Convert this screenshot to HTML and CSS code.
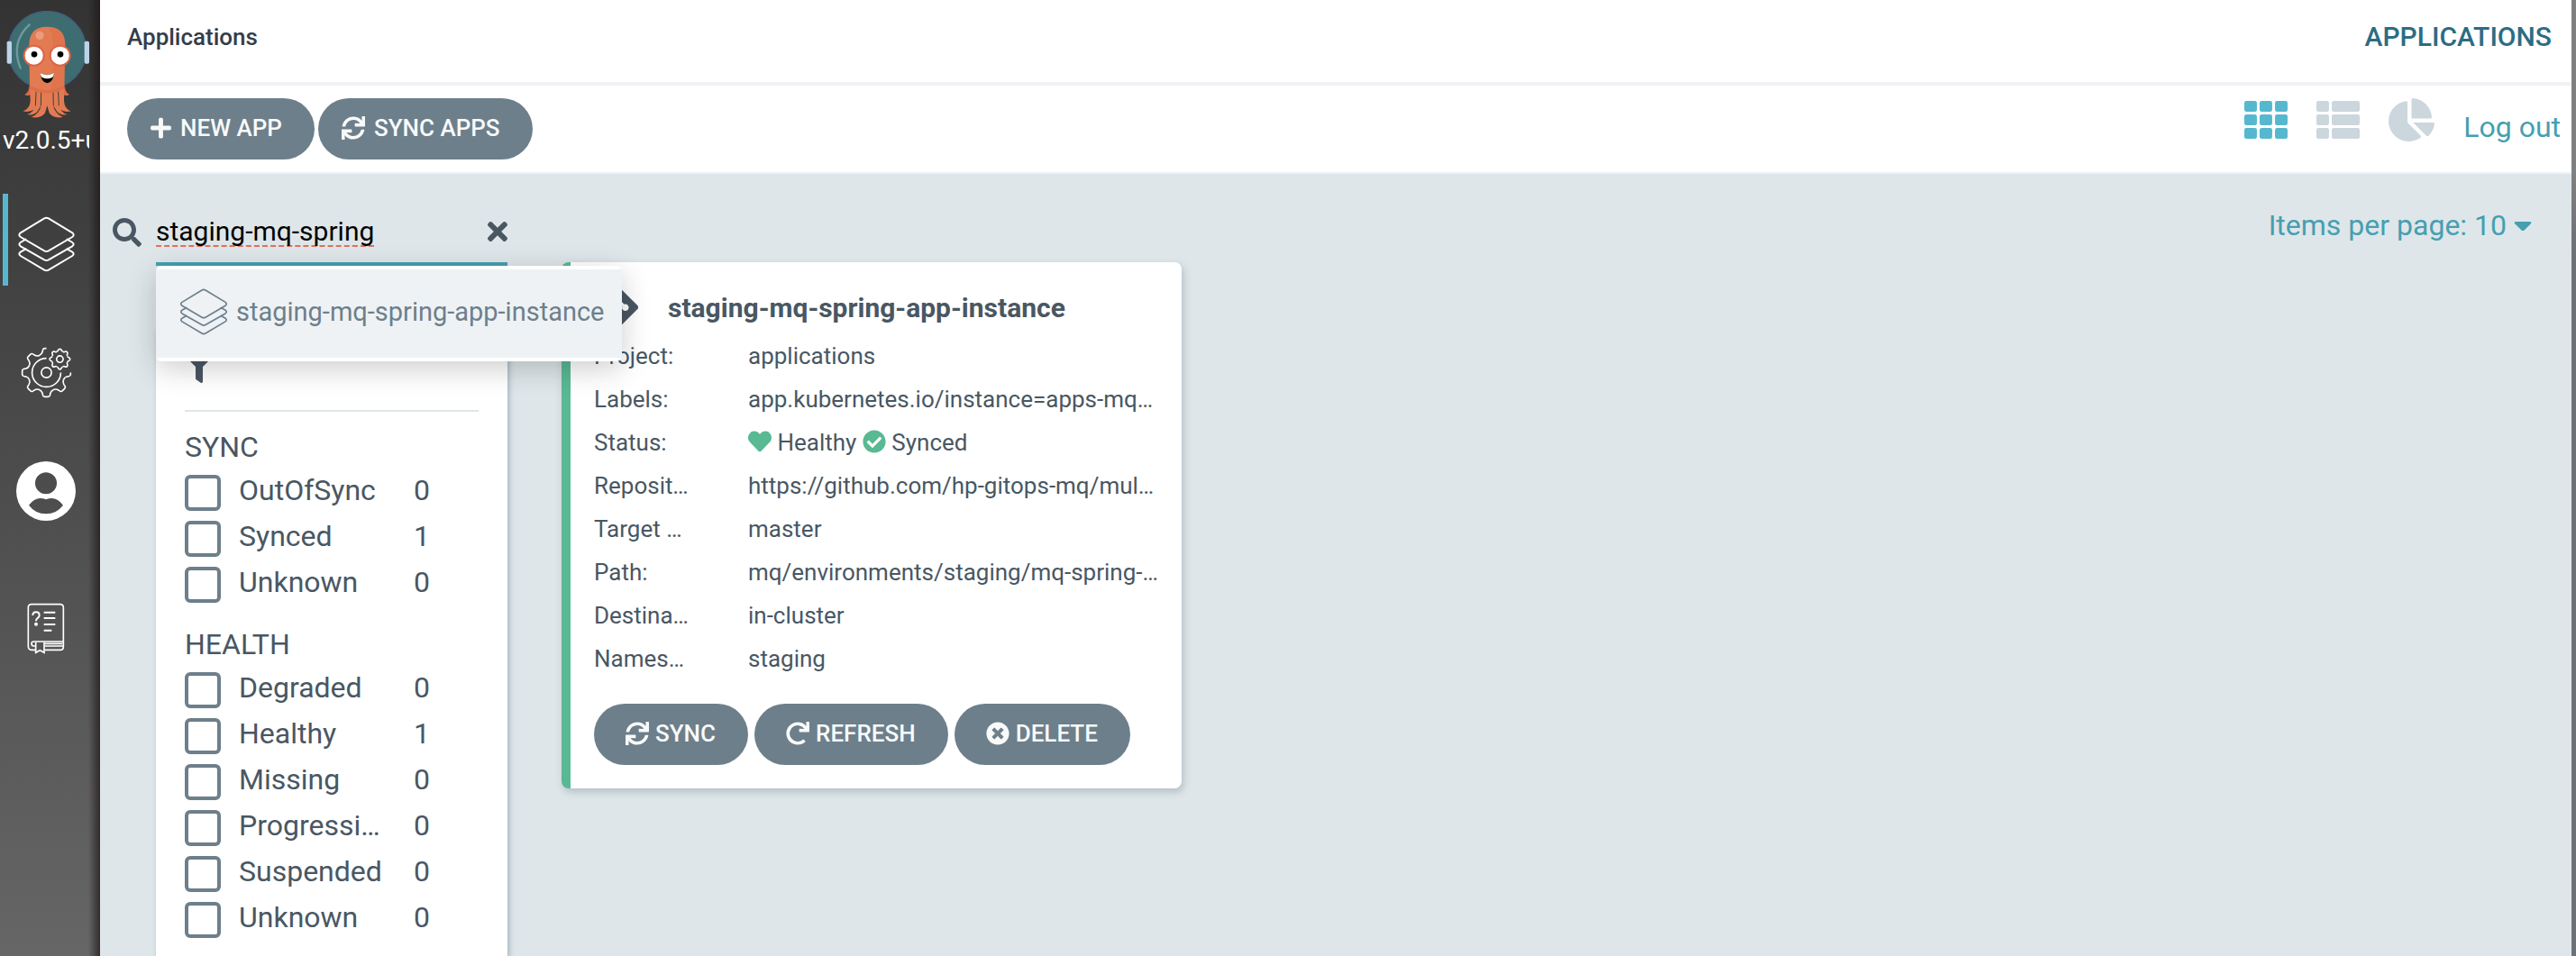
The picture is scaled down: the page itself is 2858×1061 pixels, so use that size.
FILE: index.html
```html
<!DOCTYPE html>
<html lang="en">
<head>
<meta charset="utf-8">
<title>Applications</title>
<link rel="stylesheet" href="styles.css">
</head>
<body>
<svg class="defs" aria-hidden="true">
  <symbol id="i-layers" viewBox="59 720 188 186">
    <g fill="none" stroke="currentColor" stroke-linejoin="round" stroke-linecap="round">
      <path d="M146 727 Q153 723 160 727 L239 775 Q248 782 239 789 L160 835 Q153 839 146 835 L67 789 Q58 782 67 775 Z"/>
      <path d="M84 797 L67 807 Q58 813 67 820 L146 865 Q153 869 160 865 L239 820 Q248 813 239 807 L222 797"/>
      <path d="M84 829 L67 839 Q58 845 67 852 L146 899 Q153 903 160 899 L239 852 Q248 845 239 839 L222 829"/>
    </g>
  </symbol>
  <symbol id="i-sync" viewBox="0 0 512 512"><path fill="currentColor" d="M440.65 12.57l4 82.77A247.16 247.16 0 0 0 255.83 8C134.73 8 33.91 94.92 12.29 209.82A12 12 0 0 0 24.09 224h49.05a12 12 0 0 0 11.67-9.26 175.91 175.91 0 0 1 317-56.94l-101.46-4.86a12 12 0 0 0-12.57 12v47.41a12 12 0 0 0 12 12H500a12 12 0 0 0 12-12V12a12 12 0 0 0-12-12h-47.37a12 12 0 0 0-11.98 12.57zM255.83 432a175.61 175.61 0 0 1-146-77.8l101.8 4.87a12 12 0 0 0 12.57-12v-47.4a12 12 0 0 0-12-12H12a12 12 0 0 0-12 12V500a12 12 0 0 0 12 12h47.35a12 12 0 0 0 12-12.6l-4.15-82.57A247.17 247.17 0 0 0 255.83 504c121.11 0 221.93-86.92 243.55-201.82a12 12 0 0 0-11.8-14.18h-49.05a12 12 0 0 0-11.67 9.26A175.86 175.86 0 0 1 255.83 432z"/></symbol>
</svg>
<div class="layout">
  <aside class="sidebar">
    <svg class="logo" viewBox="21 36 276 357" role="img" aria-label="Argo">
      <circle cx="157" cy="167" r="129" fill="#3d6d71" stroke="#43617b" stroke-width="5"/>
      <rect x="23" y="137" width="16" height="75" rx="5" fill="#bcd3ea"/>
      <rect x="281" y="137" width="16" height="75" rx="5" fill="#bcd3ea"/>
      <path d="M98 82 Q34 140 68 227" fill="none" stroke="#6f9b9c" stroke-width="7" stroke-linecap="round"/>
      <path d="M97 282 Q98 308 82 315 Q92 322 104 314 Z M216 282 Q215 308 231 315 Q221 322 209 314 Z" fill="#dd6a4c"/>
      <path d="M97 150 Q97 89 157 89 Q217 89 217 150 L214 290 L213 335 Q214 362 236 370 Q214 376 200 364 L197 350 Q200 374 224 381 Q204 386 190 372 L177 350 Q182 378 210 390 Q176 396 164 376 L157 352 L150 376 Q138 396 104 390 Q132 378 137 350 L124 372 Q110 386 90 381 Q114 374 117 350 L114 364 Q98 376 76 370 Q100 362 101 335 L99 290 Z" fill="#e27b52"/>
      <path d="M120 305 L118 352 M137 308 L136 352 M177 308 L178 352 M194 305 L196 352" stroke="#3f4041" stroke-width="3"/>
      <path d="M160 89 Q217 91 217 150 L213 290 Q190 300 170 300 Q182 200 177 150 Q176 105 160 89Z" fill="#dd7048" opacity=".5"/>
      <path d="M99 284 Q157 316 214 284 L213 296 Q157 324 100 296 Z" fill="#db6a45" opacity=".7"/>
      <circle cx="132" cy="118" r="14" fill="#e99c7e"/>
      <circle cx="113" cy="185" r="36" fill="#dc6448"/><circle cx="200" cy="185" r="36" fill="#dc6448"/>
      <circle cx="113" cy="185" r="30" fill="#fff"/><circle cx="200" cy="185" r="30" fill="#fff"/>
      <circle cx="114" cy="181" r="10"/><circle cx="201" cy="181" r="10"/>
      <path d="M134 243 Q157 256 180 243 Q176 276 157 277 Q138 276 134 243Z"/>
      <path d="M134 243 Q157 256 180 243 Q179 252 175 257 Q157 267 139 257 Q135 252 134 243Z" fill="#fff"/>
    </svg>
    <div class="version">v2.0.5+u</div>
    <nav class="nav">
      <a class="nav-link active" href="#" aria-label="Applications"><svg class="nav-layers"><use href="#i-layers"/></svg></a>
      <a class="nav-link" href="#" aria-label="Settings">
        <svg class="nav-gear" viewBox="-86 -86 172 172" fill="none" stroke="currentColor" stroke-width="5">
          <defs>
            <path id="tooth" d="M-24 57 Q-15 61 -13 70 L-12 76 Q-11 81 -5 81 H5 Q11 81 12 76 L13 70 Q15 61 24 57"/>
            <path id="cog" d="M-10 -25 Q-6 -27 -5 -31 Q-4 -34 0 -34 Q4 -34 5 -31 Q6 -27 10 -25"/>
          </defs>
          <use href="#tooth"/><use href="#tooth" transform="rotate(45)"/><use href="#tooth" transform="rotate(90)"/><use href="#tooth" transform="rotate(135)"/><use href="#tooth" transform="rotate(-45)"/>
          <path transform="rotate(180)" d="M0 81 H5 Q11 81 12 76 L13 70 Q15 61 24 57"/>
          <path transform="rotate(-90)" d="M-24 57 Q-15 61 -13 70 L-12 76 Q-11 81 -5 81 H0"/>
          <path d="M0 -48 A48 48 0 1 0 48 0"/><circle r="17"/>
          <g transform="translate(45 -45)">
            <circle r="11"/>
            <use href="#cog"/><use href="#cog" transform="rotate(45)"/><use href="#cog" transform="rotate(90)"/><use href="#cog" transform="rotate(135)"/><use href="#cog" transform="rotate(180)"/><use href="#cog" transform="rotate(225)"/><use href="#cog" transform="rotate(270)"/><use href="#cog" transform="rotate(315)"/>
          </g>
        </svg>
      </a>
      <a class="nav-link" href="#" aria-label="User info">
        <svg class="nav-user" viewBox="54 428 198 261"><path fill="currentColor" fill-rule="evenodd" d="M54 527a99 99 0 1 0 198 0a99 99 0 1 0 -198 0Z M117 501a36 36 0 1 0 72 0a36 36 0 1 0 -72 0Z M96 574Q120 541 153 555Q186 541 210 574Q188 603 153 603Q118 603 96 574Z"/></svg>
      </a>
      <a class="nav-link" href="#" aria-label="Documentation">
        <svg class="nav-book" viewBox="94 895 126 171" fill="none" stroke="currentColor" stroke-width="5">
          <path d="M122 1052 H109 Q98 1052 98 1039 V911 Q98 900 109 900 H204 Q215 900 215 911 V1041 Q215 1052 204 1052 H153"/>
          <path d="M215 1024 H116 Q109 1024 109 1031 Q109 1039 116 1039 H122 M153 1039 H215 M153 1031 H212"/>
          <path d="M123 1026 V1061 L137 1053 L151 1061 V1026"/>
          <path stroke-width="6" d="M113 937 Q113 926 124 926 Q135 926 135 936 Q135 943 129 946 Q124 949 124 956"/>
          <circle cx="124" cy="966" r="6" fill="currentColor" stroke="none"/>
          <path stroke-width="6" d="M150 927 H188 M150 946 H188 M150 967 H188 M150 987 H176"/>
        </svg>
      </a>
    </nav>
  </aside>
  <main class="main">
    <header class="topbar">
      <h1 class="crumb">Applications</h1>
      <div class="page-title">APPLICATIONS</div>
    </header>
    <div class="toolbar">
      <div class="actions">
        <button class="btn" type="button"><svg class="ic-plus" viewBox="0 0 448 512"><path fill="currentColor" d="M416 208H272V64c0-17.67-14.33-32-32-32h-32c-17.67 0-32 14.33-32 32v144H32c-17.67 0-32 14.33-32 32v32c0 17.67 14.33 32 32 32h144v144c0 17.67 14.33 32 32 32h32c17.67 0 32-14.33 32-32V304h144c17.67 0 32-14.33 32-32v-32c0-17.67-14.33-32-32-32z"/></svg>NEW APP</button>
        <button class="btn" type="button"><svg class="ic"><use href="#i-sync"/></svg>SYNC APPS</button>
      </div>
      <div class="views">
        <a class="view selected" href="#" aria-label="Tiles"><svg class="ic-view" viewBox="0 0 512 512" fill="currentColor"><rect y="32" width="149" height="128" rx="24"/><rect x="181" y="32" width="149" height="128" rx="24"/><rect x="363" y="32" width="149" height="128" rx="24"/><rect y="192" width="149" height="128" rx="24"/><rect x="181" y="192" width="149" height="128" rx="24"/><rect x="363" y="192" width="149" height="128" rx="24"/><rect y="352" width="149" height="128" rx="24"/><rect x="181" y="352" width="149" height="128" rx="24"/><rect x="363" y="352" width="149" height="128" rx="24"/></svg></a>
        <a class="view" href="#" aria-label="List"><svg class="ic-view" viewBox="0 0 512 512" fill="currentColor"><rect y="32" width="149" height="128" rx="24"/><rect x="181" y="32" width="331" height="128" rx="24"/><rect y="192" width="149" height="128" rx="24"/><rect x="181" y="192" width="331" height="128" rx="24"/><rect y="352" width="149" height="128" rx="24"/><rect x="181" y="352" width="331" height="128" rx="24"/></svg></a>
        <a class="view" href="#" aria-label="Summary"><svg class="ic-pie" viewBox="0 0 544 512"><path fill="currentColor" d="M527.79 288H290.5l158.03 158.03c6.04 6.04 15.98 6.53 22.19.68 38.7-36.46 65.32-85.61 73.13-140.86 1.34-9.46-6.51-17.85-16.06-17.85zm-15.83-64.8C503.72 103.74 408.26 8.28 288.8.04 279.68-.59 272 7.1 272 16.24V240h223.77c9.14 0 16.82-7.68 16.19-16.8zM224 288V50.71c0-9.55-8.39-17.4-17.84-16.06C86.99 51.49-4.1 155.6.14 280.37 4.5 408.51 114.83 513.59 243.03 511.98c50.4-.63 96.97-16.87 135.26-44.03 7.9-5.6 8.42-17.23 1.57-24.08L224 288z"/></svg></a>
        <a class="logout" href="#">Log out</a>
      </div>
    </div>
    <div class="content">
      <section class="side">
        <div class="search">
          <svg class="ic-search" viewBox="0 0 512 512"><path fill="currentColor" d="M505 442.700L405.300 343c-4.500-4.500-10.600-7-17-7H372c27.600-35.300 44-79.700 44-128C416 93.100 322.900 0 208 0S0 93.100 0 208s93.100 208 208 208c48.300 0 92.700-16.400 128-44v16.300c0 6.400 2.500 12.500 7 17l99.700 99.700c9.400 9.400 24.600 9.400 33.900 0l28.300-28.300c9.400-9.400 9.400-24.600.1-34zM208 336c-70.700 0-128-57.200-128-128 0-70.700 57.200-128 128-128 70.700 0 128 57.200 128 128 0 70.700-57.200 128-128 128z"/></svg>
          <div class="field">
            <input class="query" type="text" aria-label="Search applications" value="staging-mq-spring">
            <button class="clear" type="button" aria-label="Clear"><svg class="ic-times" viewBox="0 0 352 352"><path fill="currentColor" transform="translate(0 -80)" d="M242.720 256l100.070-100.070c12.280-12.280 12.280-32.190 0-44.480l-22.240-22.240c-12.280-12.280-32.190-12.280-44.480 0L176 189.280 75.930 89.210c-12.280-12.280-32.190-12.280-44.480 0L9.210 111.450c-12.280 12.280-12.280 32.190 0 44.480L109.280 256 9.210 356.070c-12.280 12.280-12.280 32.190 0 44.480l22.240 22.240c12.280 12.280 32.200 12.280 44.480 0L176 322.720l100.070 100.070c12.280 12.280 32.200 12.280 44.480 0l22.240-22.240c12.280-12.280 12.280-32.190 0-44.480L242.720 256z"/></svg></button>
            <div class="suggest"><a class="suggestion" href="#"><svg class="ic-layers"><use href="#i-layers"/></svg>staging-mq-spring-app-instance</a></div>
          </div>
        </div>
        <div class="filters">
          <div class="filters-head"><svg class="ic-filter" viewBox="0 0 512 512"><path fill="currentColor" d="M487.976 0H24.028C2.710 0-8.047 25.866 7.058 40.971L192 225.941V432c0 7.831 3.821 15.170 10.237 19.662l80 55.980C298.020 518.690 320 507.493 320 487.980V225.941l184.947-184.970C520.021 25.896 509.338 0 487.976 0z"/></svg></div>
          <fieldset class="group">
            <legend>SYNC</legend>
            <label class="opt"><input type="checkbox"><span class="name">OutOfSync</span><span>0</span></label>
            <label class="opt"><input type="checkbox"><span class="name">Synced</span><span>1</span></label>
            <label class="opt"><input type="checkbox"><span class="name">Unknown</span><span>0</span></label>
          </fieldset>
          <fieldset class="group">
            <legend>HEALTH</legend>
            <label class="opt"><input type="checkbox"><span class="name">Degraded</span><span>0</span></label>
            <label class="opt"><input type="checkbox"><span class="name">Healthy</span><span>1</span></label>
            <label class="opt"><input type="checkbox"><span class="name">Missing</span><span>0</span></label>
            <label class="opt"><input type="checkbox"><span class="name">Progressing</span><span>0</span></label>
            <label class="opt"><input type="checkbox"><span class="name">Suspended</span><span>0</span></label>
            <label class="opt"><input type="checkbox"><span class="name">Unknown</span><span>0</span></label>
          </fieldset>
        </div>
      </section>
      <section class="results">
        <button class="pager" type="button">Items per page: 10<svg class="ic-caret" viewBox="0 0 320 192"><path fill="currentColor" transform="translate(0 -160)" d="M31.300 192h257.300c17.800 0 26.700 21.500 14.100 34.100L174.100 354.800c-7.800 7.800-20.500 7.800-28.300 0L17.200 226.100C4.600 213.500 13.500 192 31.300 192z"/></svg></button>
        <article class="card">
          <h2 class="card-title"><svg class="ic-git" viewBox="0 0 448 512"><path fill="currentColor" d="M439.550 236.050L244 40.450a28.870 28.870 0 0 0-40.810 0l-40.660 40.630 51.520 51.520c27.060-9.140 52.680 16.770 43.390 43.680l49.660 49.660c34.230-11.800 61.180 31 35.470 56.690-26.490 26.490-70.210-2.870-56-37.340L240.220 199v121.850c25.300 12.540 22.260 41.850 9.080 55a34.340 34.340 0 0 1-48.550 0c-17.570-17.600-11.070-46.910 11.250-56v-123c-20.800-8.510-24.600-30.740-18.640-45L142.570 101 8.450 235.140a28.860 28.860 0 0 0 0 40.810l195.610 195.600a28.860 28.860 0 0 0 40.800 0l194.690-194.690a28.860 28.860 0 0 0 0-40.810z"/></svg>staging-mq-spring-app-instance</h2>
          <dl class="facts">
            <dt>Project:</dt><dd>applications</dd>
            <dt>Labels:</dt><dd>app.kubernetes.io/instance=apps-mq-staging</dd>
            <dt>Status:</dt><dd><svg class="ic-state" viewBox="0 0 512 512"><path fill="currentColor" d="M462.300 62.600C407.500 15.900 326 24.300 275.700 76.200L256 96.500l-19.700-20.300C186.100 24.300 104.500 15.900 49.700 62.600c-62.800 53.600-66.100 149.800-9.900 207.900l193.500 199.800c12.500 12.900 32.800 12.900 45.300 0l193.500-199.800c56.300-58.100 53-154.300-9.800-207.900z"/></svg> Healthy <svg class="ic-state" viewBox="0 0 512 512"><path fill="currentColor" d="M504 256c0 136.967-111.033 248-248 248S8 392.967 8 256 119.033 8 256 8s248 111.033 248 248zM227.314 387.314l184-184c6.248-6.248 6.248-16.379 0-22.627l-22.627-22.627c-6.248-6.249-16.379-6.249-22.628 0L216 308.118l-70.059-70.059c-6.248-6.248-16.379-6.248-22.628 0l-22.627 22.627c-6.248 6.248-6.248 16.379 0 22.627l104 104c6.249 6.249 16.379 6.249 22.628.001z"/></svg> Synced</dd>
            <dt>Repository:</dt><dd>https://github.com/hp-gitops-mq/multi-tenancy</dd>
            <dt>Target Revision:</dt><dd>master</dd>
            <dt>Path:</dt><dd>mq/environments/staging/mq-spring-app</dd>
            <dt>Destination:</dt><dd>in-cluster</dd>
            <dt>Namespace:</dt><dd>staging</dd>
          </dl>
          <div class="card-actions">
            <button class="btn tight" type="button"><svg class="ic"><use href="#i-sync"/></svg>SYNC</button>
            <button class="btn tight" type="button"><svg class="ic" viewBox="0 0 512 512"><path fill="currentColor" d="M500.330 0h-47.410a12 12 0 0 0-12 12.570l4 82.760A247.420 247.420 0 0 0 256 8C119.340 8 7.900 119.530 8 256.190 8.100 393.070 119.100 504 256 504a247.100 247.100 0 0 0 166.180-63.910 12 12 0 0 0 .48-17.430l-34-34a12 12 0 0 0-16.380-.55A176 176 0 1 1 402.100 157.800l-101.530-4.870a12 12 0 0 0-12.570 12v47.410a12 12 0 0 0 12 12h200.330a12 12 0 0 0 12-12V12a12 12 0 0 0-12-12z"/></svg>REFRESH</button>
            <button class="btn tight" type="button"><svg class="ic" viewBox="0 0 512 512"><path fill="currentColor" d="M256 8C119 8 8 119 8 256s111 248 248 248 248-111 248-248S393 8 256 8zm121.600 313.100c4.700 4.700 4.700 12.300 0 17L338 377.600c-4.700 4.700-12.300 4.700-17 0L256 312l-65.100 65.600c-4.700 4.700-12.300 4.700-17 0L134.400 338c-4.700-4.700-4.700-12.300 0-17l65.600-65-65.600-65.100c-4.700-4.700-4.700-12.300 0-17l39.600-39.600c4.700-4.700 12.300-4.700 17 0l65 65.700 65.100-65.600c4.700-4.700 12.300-4.700 17 0l39.600 39.600c4.700 4.700 4.700 12.300 0 17L312 256l65.600 65.100z"/></svg>DELETE</button>
          </div>
        </article>
      </section>
    </div>
  </main>
  <div class="edge"></div>
</div>
</body>
</html>
```
FILE: styles.css
```css
* { box-sizing: border-box; }
body { margin: 0; font-family: Roboto, sans-serif; font-size: 26px; color: #495763; }
svg { display: block; flex: none; }
a { color: inherit; text-decoration: none; }
button { font-family: inherit; color: inherit; border: 0; background: none; padding: 0; cursor: pointer; }
.defs { position: absolute; width: 0; height: 0; }

.layout { display: flex; height: 100vh; overflow: hidden; }

.sidebar { flex: none; width: 111px; padding: 12px 12px 0 3px; color: #fff;
  background: linear-gradient(to right, transparent 98px, rgba(30, 20, 20, .7)), linear-gradient(#333, #666); }
.logo { width: 92px; height: 119px; margin-left: 4px; }
.version { width: 96px; height: 50px; line-height: 50px; overflow: hidden; white-space: nowrap; font-size: 28px; }
.nav { display: flex; flex-direction: column; gap: 40px; margin-top: 34px; }
.nav-link { display: flex; align-items: center; justify-content: center; height: 102px; padding: 10px 6px 0 0; border-left: 6px solid transparent; }
.nav-link.active { border-color: #56b8ce; }
.nav-layers { width: 63px; height: 62px; stroke-width: 6px; }
.nav-gear { width: 57px; height: 57px; }
.nav-user { width: 66px; height: 87px; }
.nav-book { width: 42px; height: 57px; }

.main { flex: 1; min-width: 0; display: flex; flex-direction: column; background: #dee6e9; }
.topbar { display: flex; align-items: center; justify-content: space-between; height: 95px; padding: 0 22px 10px 30px; background: #fff; border-bottom: 4px solid #eff1f4; }
.crumb { margin: 0; font-size: 26px; font-weight: 500; color: #363c4a; }
.page-title { font-size: 30px; font-weight: 500; color: #2c6c84; }
.toolbar { display: flex; align-items: center; justify-content: space-between; height: 98px; padding: 0 12px 0 30px; background: #fff; border-bottom: 2px solid #eef2f4; }
.actions { display: flex; gap: 4px; }
.btn { display: flex; align-items: center; gap: 10px; height: 68px; padding: 0 36px 2px 26px; border-radius: 34px; background: #6d7f8b; color: #f8fafa; font-size: 26px; font-weight: 500; }
.btn.tight { gap: 7px; padding: 0 36px 2px 35px; }
.ic { width: 26px; height: 26px; }
.ic-plus { width: 23px; height: 26px; }
.views { display: flex; align-items: center; gap: 32px; color: #ccd6dd; }
.view { padding-bottom: 20px; }
.view.selected { color: #56b8ce; }
.ic-view { width: 48px; height: 48px; }
.ic-pie { width: 51px; height: 48px; }
.logout { padding-bottom: 4px; font-size: 32px; color: #469fb0; }

.content { display: flex; flex: 1; min-height: 0; gap: 60px; padding: 28px 44px 0 14px; }
.side { display: flex; flex-direction: column; width: 438px; min-height: 0; }
.search { display: flex; align-items: center; gap: 16px; height: 74px; position: relative; z-index: 2; }
.ic-search { width: 32px; height: 32px; }
.field { position: relative; display: flex; align-items: center; flex: 1; min-width: 0; height: 74px; border-bottom: 4px solid #469fb0; }
.query { flex: 1; min-width: 0; height: 70px; padding: 0; border: 0; outline: 0; background: none; font: 30px Roboto, sans-serif; color: #000;
  text-decoration: underline dashed #e2705f 3px; text-underline-offset: 5px; text-decoration-skip-ink: none; }
.clear { padding-top: 2px; }
.ic-times { width: 22px; height: 22px; }
.suggest { position: absolute; top: 74px; left: 0; padding: 4px 0; background: #fff; border-radius: 6px; box-shadow: 0 8px 32px rgba(0, 0, 0, .2); }
.suggestion { display: flex; align-items: center; gap: 9px; height: 98px; padding: 0 20px 4px 26px; background: #eef2f5; color: #6d7f8b; font-size: 29px; white-space: nowrap; }
.ic-layers { width: 54px; height: 52px; stroke-width: 6px; }

.filters { flex: none; margin: 70px 0 0 48px; padding: 28px 32px 60px; background: #fff; box-shadow: 2px 2px 6px #a5b4bf; }
.filters-head { height: 64px; border-bottom: 2px solid #dee6e9; }
.ic-filter { width: 32px; height: 32px; }
.group { display: flex; flex-direction: column; gap: 11px; margin: 0; padding: 0; border: 0; }
.group + .group { margin-top: 7px; }
.group legend { padding: 22px 0 14px; font-size: 32px; line-height: 34px; }
.opt { display: flex; gap: 20px; height: 40px; font-size: 32px; line-height: 34px; }
.opt input { appearance: none; flex: none; width: 40px; height: 40px; margin: 0; border: 4px solid #6d7f8b; border-radius: 6px; }
.name { width: 174px; height: 40px; padding-right: 10px; overflow: hidden; white-space: nowrap; text-overflow: ellipsis; }

.results { display: flex; flex: 1; min-width: 0; flex-direction: column; }
.pager { display: flex; align-items: center; align-self: flex-end; gap: 8px; height: 58px; font-size: 32px; color: #469fb0; }
.ic-caret { width: 20px; height: 12px; }
.card { width: 688px; margin-top: 12px; padding: 26px; border-left: 10px solid #58b993; border-radius: 8px; background: #fff; box-shadow: 2px 4px 8px rgba(100, 120, 130, .35); }
.card-title { display: flex; align-items: center; gap: 33px; height: 48px; margin: 0 0 6px; font-size: 30px; font-weight: 700; color: #495763; }
.ic-git { width: 49px; height: 56px; }
.facts { display: grid; grid-template-columns: 107px 1fr; column-gap: 64px; margin: 0; line-height: 48px; }
.facts dt, .facts dd { margin: 0; overflow: hidden; white-space: nowrap; text-overflow: ellipsis; }
.ic-state { display: inline-block; width: 26px; height: 26px; color: #58b993; vertical-align: -3px; }
.card-actions { display: flex; gap: 7px; margin-top: 26px; }

.edge { flex: none; width: 5px; background: linear-gradient(#808080 193px, #6d7276 280px); }
```
